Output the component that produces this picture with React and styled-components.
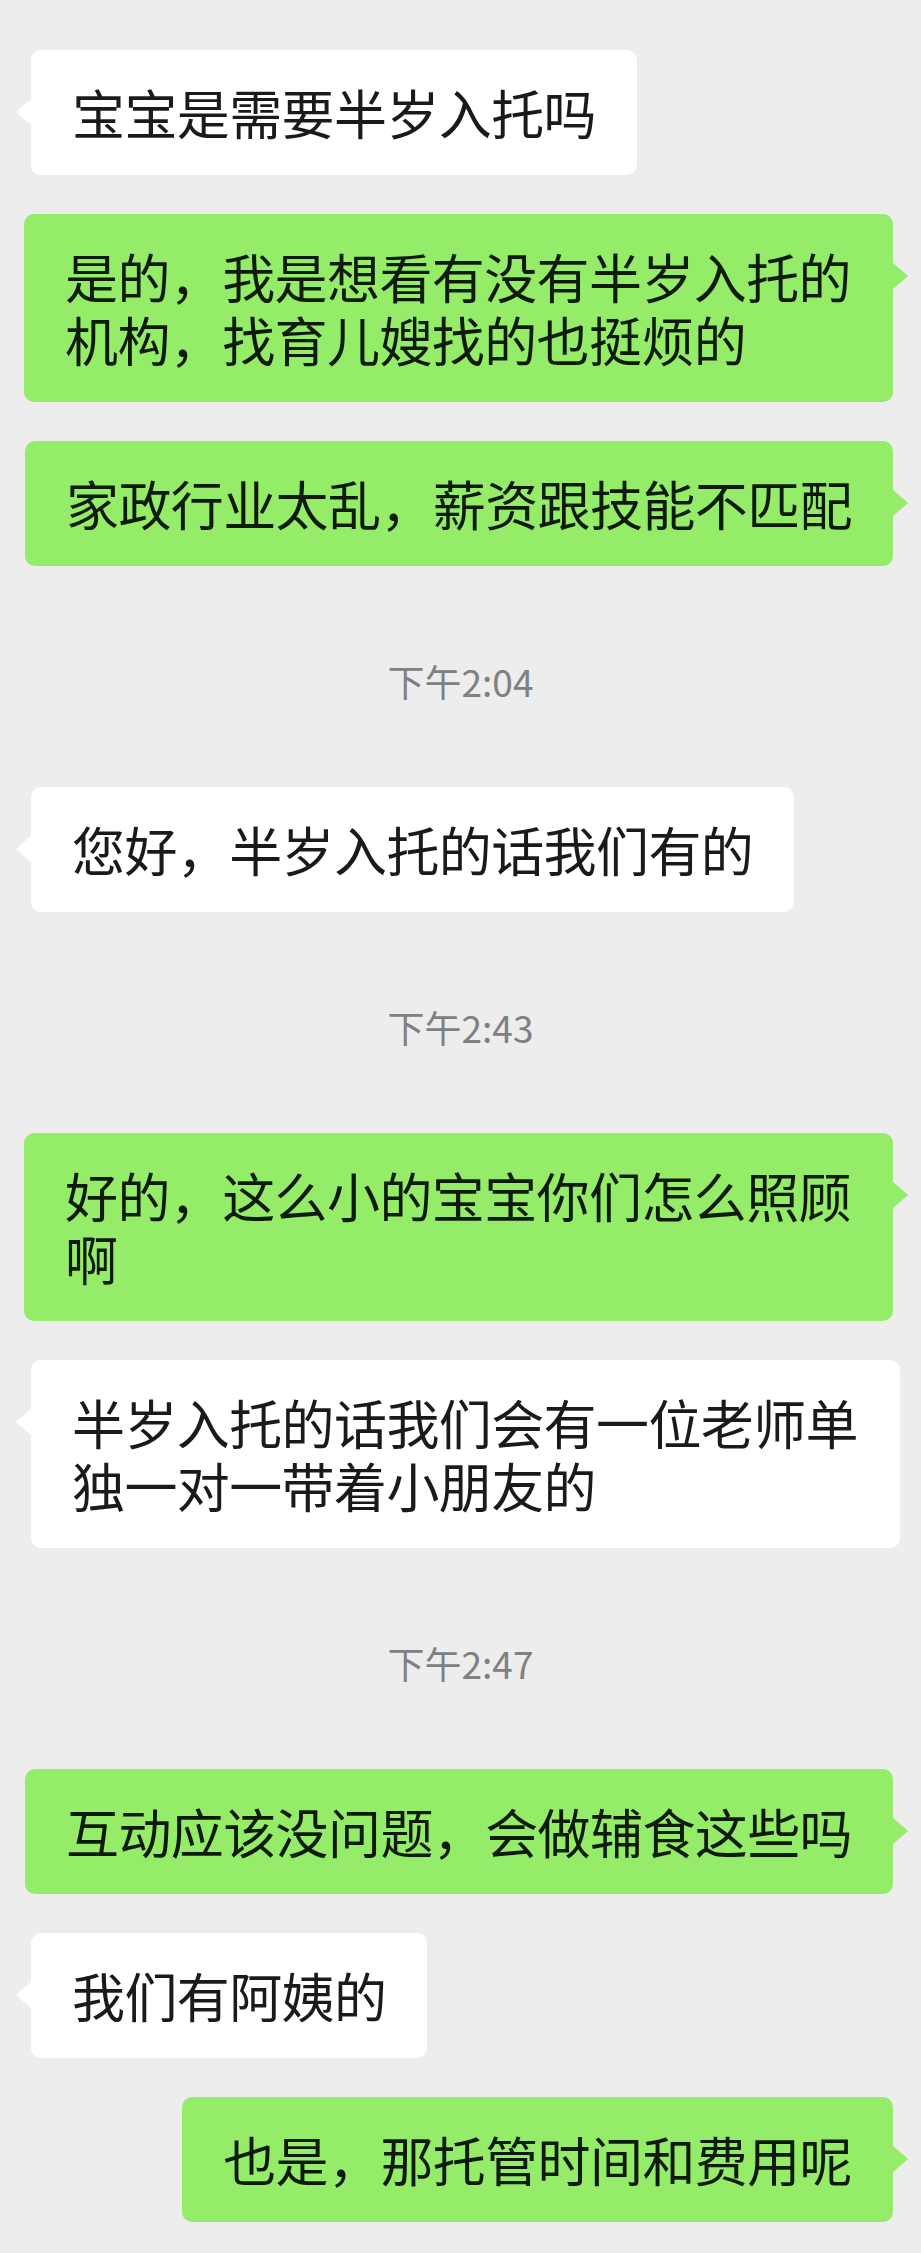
import React from "react";
import styled, { createGlobalStyle, css } from "styled-components";

const GlobalStyle = createGlobalStyle`
  html, body {
    margin: 0;
    padding: 0;
    background: #ededed;
  }
  body {
    font-family: "Noto Sans CJK SC", "Noto Sans", sans-serif;
  }
`;

const Page = styled.div`
  width: 921px;
  min-height: 2253px;
  box-sizing: border-box;
  padding-top: 50px;
  display: flex;
  flex-direction: column;
  gap: 39px;
  background: #ededed;
`;

const Row = styled.div`
  display: flex;
  justify-content: ${({ $mine }) => ($mine ? "flex-end" : "flex-start")};
  padding: ${({ $mine }) => ($mine ? "0 28px 0 0" : "0 0 0 31px")};
`;

const Bubble = styled.div`
  position: relative;
  max-width: 869px;
  box-sizing: border-box;
  padding: 31px 41px;
  border-radius: 10px;
  font-size: 53px;
  letter-spacing: -0.6px;
  line-height: 63px;
  background: ${({ $mine }) => ($mine ? "#95ec69" : "#ffffff")};
  color: ${({ $mine }) => ($mine ? "#0e1a0a" : "#1a1a1a")};

  &::before {
    content: "";
    position: absolute;
    top: 48px;
    width: 16px;
    height: 28px;
    background: inherit;
    ${({ $mine }) =>
      $mine
        ? css`
            right: -15px;
            clip-path: polygon(0 0, 88% 44%, 100% 50%, 88% 56%, 0 100%);
          `
        : css`
            left: -15px;
            clip-path: polygon(100% 0, 12% 44%, 0 50%, 12% 56%, 100% 100%);
          `}
  }
`;

const TimeStamp = styled.div`
  margin: 51px 0 42px;
  height: 50px;
  display: flex;
  align-items: center;
  justify-content: center;
  font-size: 37px;
  color: #808080;
`;

const chat = [
  { from: "them", text: "宝宝是需要半岁入托吗" },
  { from: "me", text: "是的，我是想看有没有半岁入托的机构，找育儿嫂找的也挺烦的" },
  { from: "me", text: "家政行业太乱，薪资跟技能不匹配" },
  { time: "下午2:04" },
  { from: "them", text: "您好，半岁入托的话我们有的" },
  { time: "下午2:43" },
  { from: "me", text: "好的，这么小的宝宝你们怎么照顾啊" },
  { from: "them", text: "半岁入托的话我们会有一位老师单独一对一带着小朋友的" },
  { time: "下午2:47" },
  { from: "me", text: "互动应该没问题，会做辅食这些吗" },
  { from: "them", text: "我们有阿姨的" },
  { from: "me", text: "也是，那托管时间和费用呢" },
];

const App = () => {
  return (
    <>
      <GlobalStyle />
      <Page>
        {chat.map((item, i) =>
          item.time ? (
            <TimeStamp key={i}>{item.time}</TimeStamp>
          ) : (
            <Row key={i} $mine={item.from === "me"}>
              <Bubble $mine={item.from === "me"}>{item.text}</Bubble>
            </Row>
          )
        )}
      </Page>
    </>
  );
};

export default App;
